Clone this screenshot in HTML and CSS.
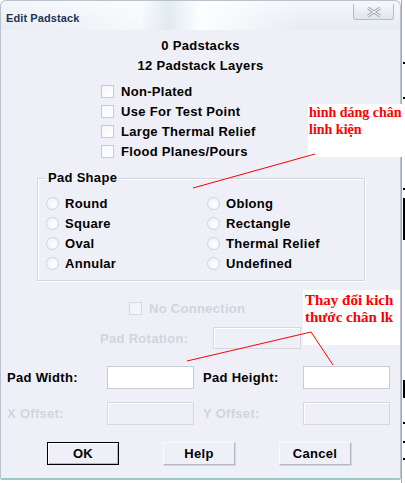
FILE: index.html
```html
<!DOCTYPE html>
<html>
<head>
<meta charset="utf-8">
<link rel="stylesheet" href="styles.css">
</head>
<body>
<div class="screen">
  <div class="window">
    <div class="titlebar">
      <span class="title">Edit Padstack</span>
      <span class="close">
        <svg width="14" height="10" viewBox="0 0 14 10"><path d="M1 1 L13 9 M13 1 L1 9" stroke="#9aa2ad" stroke-width="3" fill="none"/><path d="M1 1 L13 9 M13 1 L1 9" stroke="#eef1f5" stroke-width="1.2" fill="none"/></svg>
      </span>
    </div>
    <div class="content">
      <div class="info">0 Padstacks</div>
      <div class="info">12 Padstack Layers</div>
      <div class="checks">
        <label class="chk"><span class="box"></span>Non-Plated</label>
        <label class="chk"><span class="box"></span>Use For Test Point</label>
        <label class="chk"><span class="box"></span>Large Thermal Relief</label>
        <label class="chk"><span class="box"></span>Flood Planes/Pours</label>
      </div>
      <fieldset class="group">
        <legend>Pad Shape</legend>
        <div class="radios">
          <label class="rad"><span class="dot"></span>Round</label>
          <label class="rad"><span class="dot"></span>Oblong</label>
          <label class="rad"><span class="dot"></span>Square</label>
          <label class="rad"><span class="dot"></span>Rectangle</label>
          <label class="rad"><span class="dot"></span>Oval</label>
          <label class="rad"><span class="dot"></span>Thermal Relief</label>
          <label class="rad"><span class="dot"></span>Annular</label>
          <label class="rad"><span class="dot"></span>Undefined</label>
        </div>
      </fieldset>
      <div class="noconn"><span class="box dis"></span><span class="distext">No Connection</span></div>
      <div class="rotation"><span class="lbl distext">Pad Rotation:</span><span class="field dis"></span></div>
      <div class="dims">
        <span class="lbl">Pad Width:</span><span class="field"></span>
        <span class="lbl">Pad Height:</span><span class="field"></span>
        <span class="lbl distext">X Offset:</span><span class="field dis"></span>
        <span class="lbl distext">Y Offset:</span><span class="field dis"></span>
      </div>
      <div class="buttons">
        <span class="btn default">OK</span>
        <span class="btn">Help</span>
        <span class="btn">Cancel</span>
      </div>
    </div>
    <div class="note note1">hình dáng chân<br>linh kiện</div>
    <div class="note note2">Thay đổi kich<br>thước chân lk</div>
    <svg class="lines" width="405" height="483" viewBox="0 0 405 483">
      <path d="M315 154 L193 188" stroke="#ff0000" stroke-width="1" fill="none"/>
      <path d="M311 332 L187 361 M311 332 L333 365" stroke="#ff0000" stroke-width="1" fill="none"/>
    </svg>
  </div>
  <div class="strip"></div>
</div>
</body>
</html>
```
FILE: styles.css
```css
html, body {
  margin: 0;
  padding: 0;
  background: #ffffff;
}
.screen {
  display: flex;
  width: 405px;
  height: 483px;
  overflow: hidden;
}
.window {
  position: relative;
  width: 399px;
  height: 477px;
  flex: none;
  background: #eff0f7;
  border: 1px solid #b9c3cf;
  border-bottom: 2px solid #9ec8c4;
  border-radius: 6px 6px 2px 2px;
  font-family: "Liberation Sans", Arial, sans-serif;
  font-weight: bold;
  font-size: 13px;
  letter-spacing: 0.3px;
  color: #000;
}
.titlebar {
  height: 29px;
  display: flex;
  align-items: flex-start;
  justify-content: space-between;
  border-radius: 6px 6px 0 0;
  background:
    linear-gradient(90deg, rgba(255,255,255,0) 0%, rgba(255,255,255,0.6) 35%, rgba(220,232,236,0.7) 42%, rgba(255,255,255,0.9) 50%, rgba(255,255,255,0) 75%),
    linear-gradient(180deg, #f4f6fa 0%, #e7ecf2 100%);
}
.title {
  font-size: 11px;
  letter-spacing: 0.1px;
  color: #1e3453;
  margin: 11px 0 0 5px;
}
.close {
  width: 39px;
  height: 15px;
  margin: 3px 6px 0 0;
  border: 1px solid #b5bcc7;
  border-top: none;
  border-radius: 0 0 3px 3px;
  background: linear-gradient(180deg, #f5f7fa, #dfe4ea);
  display: flex;
  align-items: center;
  justify-content: center;
}
.content {
  display: flex;
  flex-direction: column;
  padding-top: 6px;
}
.info {
  height: 20px;
  line-height: 20px;
  text-align: center;
}
.checks {
  margin-top: 5px;
  padding-left: 100px;
  display: flex;
  flex-direction: column;
}
.chk {
  height: 20px;
  display: flex;
  align-items: center;
}
.box {
  width: 11px;
  height: 11px;
  border: 1px solid #c6cad6;
  background: linear-gradient(135deg, #f6f7fa, #ffffff);
  margin-right: 7px;
  flex: none;
}
.box.dis {
  border-color: #d6d8e0;
  background: #f4f5f9;
}
.group {
  margin: 10px 0 0 36px;
  width: 310px;
  padding: 8px 8px 7px 8px;
  border: 1px solid #d3d5df;
  box-shadow: inset 1px 1px 0 #ffffff, 1px 1px 0 #ffffff;
}
.group legend {
  padding: 0 2px;
  margin-left: 0;
  line-height: 14px;
}
.radios {
  display: grid;
  grid-template-columns: 161px 1fr;
  grid-auto-rows: 20px;
}
.rad {
  display: flex;
  align-items: center;
}
.dot {
  width: 11px;
  height: 11px;
  border-radius: 50%;
  border: 1px solid #d0d3dc;
  background: radial-gradient(circle at 60% 60%, #ffffff, #eceef4);
  margin-right: 6px;
  flex: none;
}
.distext {
  color: #d2d4dd;
}
.noconn {
  margin-top: 17px;
  height: 20px;
  display: flex;
  align-items: center;
  padding-left: 128px;
}
.rotation {
  margin-top: 9px;
  display: flex;
  align-items: center;
  padding-left: 99px;
}
.rotation .lbl {
  width: 113px;
}
.rotation .field {
  width: 86px;
}
.field {
  height: 20px;
  border: 1px solid #c9ccd8;
  background: #ffffff;
  box-sizing: content-box;
}
.field.dis {
  background: #eff0f7;
  border-color: #d6d8e1;
  box-shadow: inset 1px 1px 0 #ffffff;
}
.dims {
  margin-top: 17px;
  padding-left: 6px;
  display: grid;
  grid-template-columns: 100px 96px 100px 87px;
  grid-template-rows: 23px 23px;
  row-gap: 13px;
  align-items: center;
}
.dims .field {
  width: 85px;
  height: 21px;
}
.buttons {
  margin-top: 17px;
  display: flex;
  padding-left: 46px;
  gap: 44px;
}
.btn {
  width: 70px;
  height: 21px;
  display: flex;
  align-items: center;
  justify-content: center;
  border: 1px solid #fafbfd;
  border-right-color: #b4b8c6;
  border-bottom-color: #b4b8c6;
  box-shadow: 1px 1px 0 #d3d6df;
  background: #eff0f7;
}
.btn.default {
  border: 1px solid #000;
  box-shadow: inset 1px 1px 0 #ffffff, inset -1px -1px 0 #b4b8c6;
}
.note {
  position: absolute;
  background: #ffffff;
  color: #ff0000;
  font-family: "Liberation Serif", "Times New Roman", serif;
  font-weight: bold;
  font-size: 15px;
  line-height: 17px;
  letter-spacing: 0;
  white-space: nowrap;
  overflow: hidden;
}
.note1 {
  left: 307px;
  top: 103px;
  width: 100px;
  height: 53px;
  font-size: 14px;
  padding-left: 1px;
  box-sizing: border-box;
}
.note2 {
  left: 302px;
  top: 289px;
  width: 97px;
  height: 55px;
  padding: 2px 0 0 2px;
  box-sizing: border-box;
}
.lines {
  position: absolute;
  left: -1px;
  top: -1px;
  pointer-events: none;
}
.strip {
  flex: 1;
  border-left: 1px solid #a5a8ae;
  background:
    linear-gradient(180deg, transparent 62px, #000 62px, #000 64px, transparent 64px, transparent 97px, #000 97px, #000 99px, transparent 99px, transparent 188px, #000 188px, #000 190px, transparent 190px, transparent 198px, #000 198px, #000 240px, transparent 240px, transparent 380px, #000 380px, #000 398px, transparent 398px, transparent 422px, #000 422px, #000 424px, transparent 424px, transparent 441px, #000 441px, #000 443px, transparent 443px, transparent 458px, #000 458px, #000 460px, transparent 460px);
  background-position: 1px 0;
  background-repeat: no-repeat;
}
```
